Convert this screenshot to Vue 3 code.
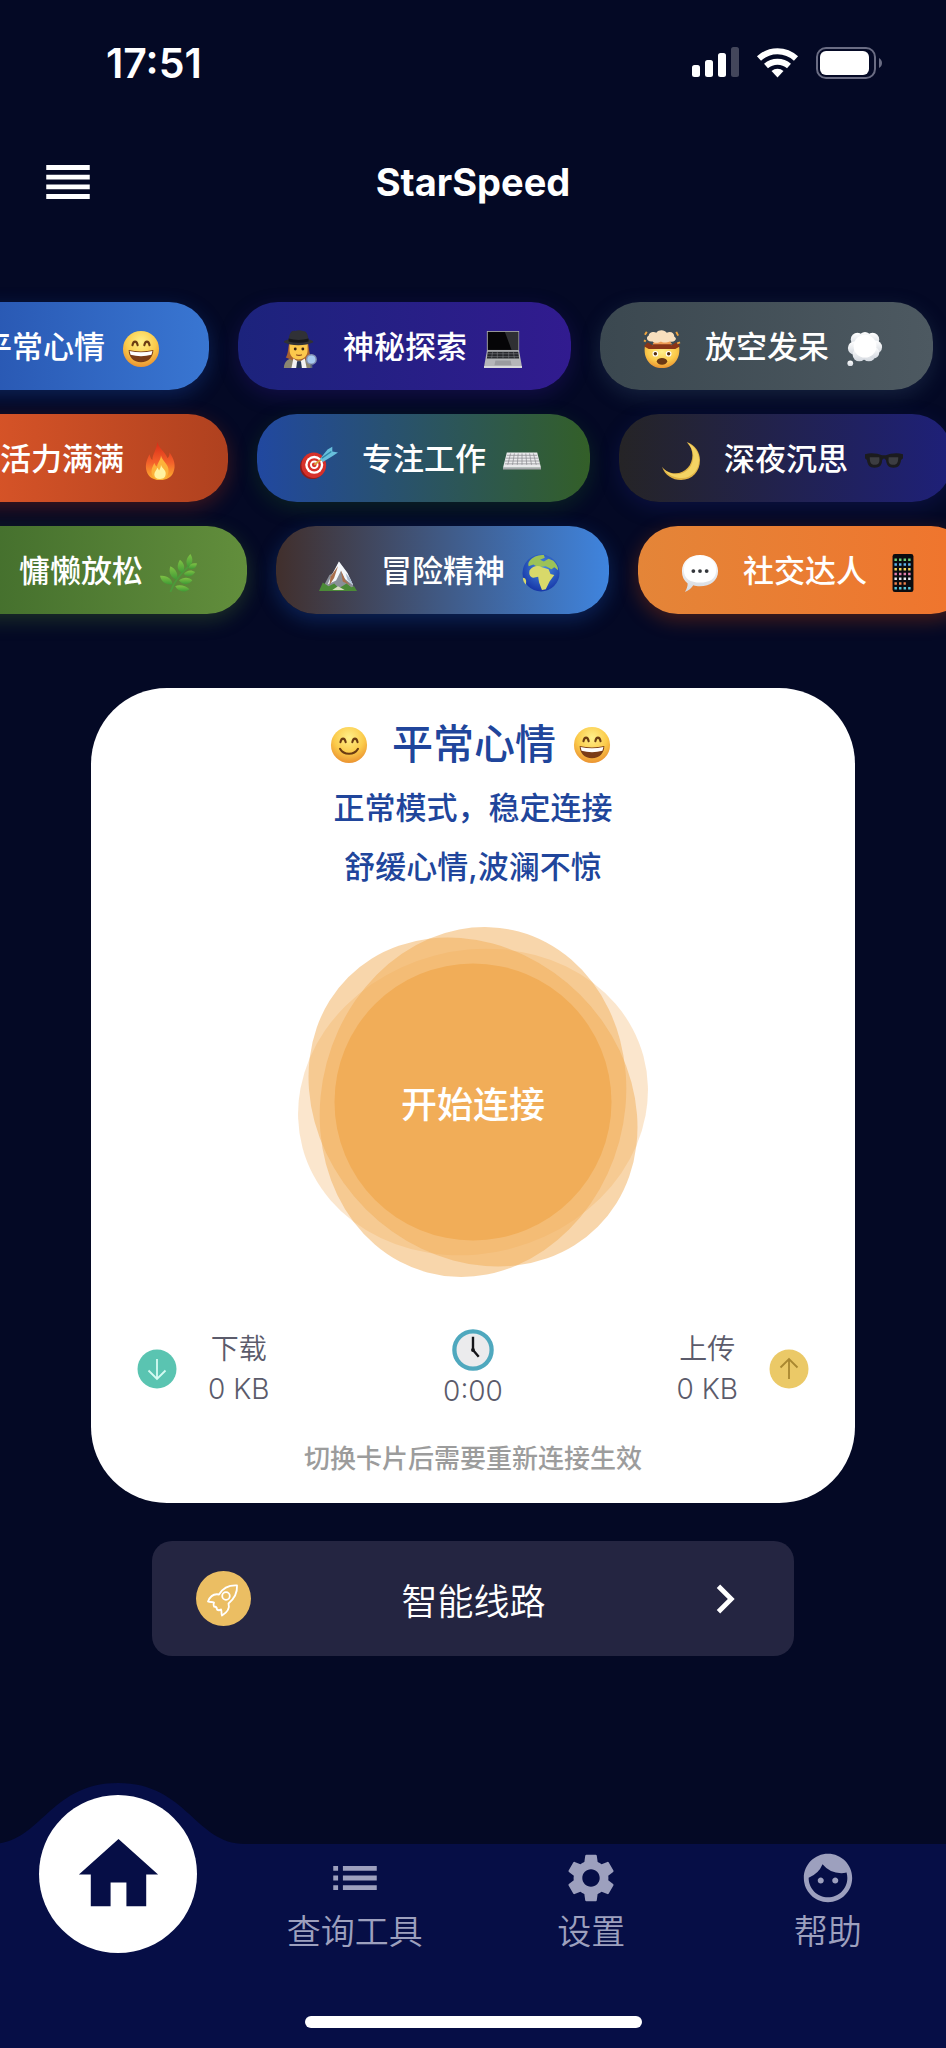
<script setup>
import { ref } from 'vue'

const lanes = [
  {
    offset: -124,
    chips: [
      { text: '平常心情', before: 'smile', after: 'grin', tone: 'calm' },
      { text: '神秘探索', before: 'detective', after: 'laptop', tone: 'mystery' },
      { text: '放空发呆', before: 'mindblown', after: 'thought', tone: 'blank' },
    ],
  },
  {
    offset: -105,
    chips: [
      { text: '活力满满', before: 'fire', after: 'fire', tone: 'energy' },
      { text: '专注工作', before: 'target', after: 'keyboard', tone: 'focus' },
      { text: '深夜沉思', before: 'moon', after: 'shades', tone: 'night' },
    ],
  },
  {
    offset: -86,
    chips: [
      { text: '慵懒放松', before: 'herb', after: 'herb', tone: 'lazy' },
      { text: '冒险精神', before: 'mountain', after: 'globe', tone: 'adventure' },
      { text: '社交达人', before: 'speech', after: 'phone', tone: 'social' },
    ],
  },
]

const tabs = [
  {
    text: '查询工具',
    icon: 'M3 13h2v-2H3v2zm0 4h2v-2H3v2zm0-8h2V7H3v2zm4 4h14v-2H7v2zm0 4h14v-2H7v2zM7 7v2h14V7H7z',
  },
  {
    text: '设置',
    icon: 'M19.14 12.94c.04-.3.06-.61.06-.94 0-.32-.02-.64-.07-.94l2.03-1.58a.49.49 0 0 0 .12-.61l-1.92-3.32a.488.488 0 0 0-.59-.22l-2.39.96c-.5-.38-1.03-.7-1.62-.94l-.36-2.54a.484.484 0 0 0-.48-.41h-3.84c-.24 0-.43.17-.47.41l-.36 2.54c-.59.24-1.13.57-1.62.94l-2.39-.96c-.22-.08-.47 0-.59.22L2.74 8.87c-.12.21-.08.47.12.61l2.03 1.58c-.05.3-.09.63-.09.94s.02.64.07.94l-2.03 1.58a.49.49 0 0 0-.12.61l1.92 3.32c.12.22.37.29.59.22l2.39-.96c.5.38 1.03.7 1.62.94l.36 2.54c.05.24.24.41.48.41h3.84c.24 0 .44-.17.47-.41l.36-2.54c.59-.24 1.13-.56 1.62-.94l2.39.96c.22.08.47 0 .59-.22l1.92-3.32c.12-.22.07-.47-.12-.61l-2.01-1.58zM12 15.6c-1.98 0-3.6-1.62-3.6-3.6s1.62-3.6 3.6-3.6 3.6 1.62 3.6 3.6-1.62 3.6-3.6 3.6z',
  },
  {
    text: '帮助',
    icon: 'M10.25 13c0 .69-.56 1.25-1.25 1.25S7.75 13.69 7.75 13s.56-1.25 1.25-1.25 1.25.56 1.25 1.25zM15 11.75c-.69 0-1.25.56-1.25 1.25s.56 1.25 1.25 1.25 1.25-.56 1.25-1.25-.56-1.25-1.25-1.25zm7 .25c0 5.52-4.48 10-10 10S2 17.52 2 12 6.48 2 12 2s10 4.48 10 10zm-2 0c0-.78-.12-1.53-.33-2.24-.7.15-1.42.24-2.17.24a10 10 0 0 1-7.76-3.69A10.016 10.016 0 0 1 4 11.86c.01.04 0 .09 0 .14 0 4.41 3.59 8 8 8s8-3.59 8-8z',
  },
]

const current = ref(lanes[0].chips[0])
const download = ref('0 KB')
const upload = ref('0 KB')
const duration = ref('0:00')
</script>

<template>
  <!-- shared emoji artwork, 40x40 each -->
  <svg class="sprite" aria-hidden="true">
    <defs>
      <radialGradient id="face" cx="50%" cy="30%" r="75%">
        <stop offset="0" stop-color="#fff08a" />
        <stop offset="0.55" stop-color="#fbcb4b" />
        <stop offset="1" stop-color="#e8892c" />
      </radialGradient>
      <linearGradient id="cloud" x1="0" y1="0" x2="0" y2="1">
        <stop offset="0" stop-color="#fff" />
        <stop offset="1" stop-color="#d3d8df" />
      </linearGradient>
      <linearGradient id="flame" x1="0" y1="0" x2="0" y2="1">
        <stop offset="0" stop-color="#d92a16" />
        <stop offset="0.55" stop-color="#f4622b" />
        <stop offset="1" stop-color="#fdb52e" />
      </linearGradient>
      <linearGradient id="leaf" x1="0" y1="0" x2="0" y2="1">
        <stop offset="0" stop-color="#7fc244" />
        <stop offset="1" stop-color="#3f9a35" />
      </linearGradient>
      <radialGradient id="sea" cx="55%" cy="35%" r="65%">
        <stop offset="0" stop-color="#4a8fe0" />
        <stop offset="1" stop-color="#1636a8" />
      </radialGradient>
    </defs>
    <symbol id="smile" viewBox="0 0 40 40">
      <circle cx="20" cy="20" r="19" fill="url(#face)" />
      <g fill="none" stroke="#6b3b12" stroke-width="2.2" stroke-linecap="round">
        <path d="M11 17c1-5 4.5-5 5.5 0M23.5 17c1-5 4.5-5 5.5 0M10.5 24c4 7 15 7 19 0" />
      </g>
    </symbol>
    <symbol id="grin" viewBox="0 0 40 40">
      <circle cx="20" cy="20" r="19" fill="url(#face)" />
      <path d="M11 16c1-5 4.5-5 5.5 0M23.5 16c1-5 4.5-5 5.5 0" fill="none" stroke="#6b3b12" stroke-width="2.2" stroke-linecap="round" />
      <path d="M7 21c8 2 18 2 26 0 0 7-5 13-13 13S7 28 7 21z" fill="#7a3c17" />
      <path d="M8 22c8 2 16 2 24 0l-1 4c-7 2-15 2-22 0z" fill="#fff" />
    </symbol>
    <symbol id="detective" viewBox="0 0 40 40">
      <path d="M3 40c0-7 5-10 11-11h9c6 1 9 5 9 11z" fill="#8a8671" />
      <path d="M9 12c-2 8-1 12-4 17l8 3h11l8-3c-3-5-2-11-4-17z" fill="#a8622f" />
      <path d="M9 12h19v9c0 6-4 10-9.500 10S9 27 9 21z" fill="#fcc84c" />
      <path d="m13 30 6 4 6-4 2 10H11z" fill="#f3f3f3" />
      <path d="M17 33h4l1 7h-6z" fill="#273657" />
      <circle cx="15" cy="20" r="1.5" fill="#3b2413" /><circle cx="23" cy="20" r="1.5" fill="#3b2413" />
      <path d="M16 26c2 1 4 1 6 0" stroke="#8c461c" stroke-width="1.3" fill="none" />
      <path d="M8 10c1-7 3-10 7-9 3-1 5-1 8 0 4 0 5 3 6 9 3 1 5 1 5 3-8 4-24 4-31 0 0-2 2-2 5-3z" fill="#303136" />
      <path d="M8 9c7 2 14 2 21 0v3c-7 2-14 2-21 0z" fill="#17181b" />
      <circle cx="32" cy="31" r="5" fill="#a6c8ef" stroke="#8390b1" stroke-width="1.5" />
      <path d="M32 36v4" stroke="#5b6480" stroke-width="2" />
    </symbol>
    <symbol id="laptop" viewBox="0 0 40 40">
      <path d="M3 1h34v22H3z" fill="#a5a5a8" />
      <path d="M4 2h32v19H4z" fill="#050507" />
      <path d="M22 2h14v19h-7z" fill="#2f3033" />
      <path d="M3 22h34l3 17H0z" fill="#b5b6b9" />
      <path d="M4 23h32l1 7H3z" fill="#27282c" />
      <path d="M4 25h32M3 28h34M9 23l-1 7M14 23v7M20 23v7M26 23v7M31 23l1 7" stroke="#8b8c90" stroke-width="0.5" />
      <path d="M12 32h16l1 5H11z" fill="#9a9b9f" />
      <path d="M0 38h40v2H0z" fill="#d8d9db" />
    </symbol>
    <symbol id="mindblown" viewBox="0 0 40 40">
      <path d="M2 17c0-2 36-2 36 0 2 13-6 23-18 23S0 30 2 17z" fill="url(#face)" />
      <path d="m1 17 4-4 5 3 5-3 5 2 5-2 5 3 5-3 4 4-5 3H6z" fill="#8a3517" />
      <path d="M10 15c2-3 2-3 1-5h18c-1 2 0 3 2 5z" fill="#ee9b55" />
      <path d="M10 12c-5 1-8-4-4-6 0-4 6-5 8-3 3-4 9-3 11 0 4-2 8 0 8 4 4 2 0 7-5 5-4 2-8 1-9 0-3 2-7 2-9 0z" fill="#f8dfbd" />
      <path d="m2 5 2-3M37 6l-2-4M1 11l2 1M39 13l-3 1" stroke="#f0a43c" stroke-width="2" />
      <circle cx="13" cy="25" r="3" fill="#fff" /><circle cx="27" cy="25" r="3" fill="#fff" />
      <circle cx="13" cy="25" r="1.8" fill="#56300f" /><circle cx="27" cy="25" r="1.8" fill="#56300f" />
      <ellipse cx="20" cy="33" rx="5.500" ry="3.500" fill="#6b3814" />
    </symbol>
    <symbol id="thought" viewBox="0 0 40 40">
      <g fill="url(#cloud)">
        <circle cx="12" cy="10" r="7" /><circle cx="20" cy="8" r="6" /><circle cx="28" cy="10" r="7" />
        <circle cx="9" cy="19" r="7" /><circle cx="31" cy="18" r="7" /><circle cx="14" cy="26" r="7" />
        <circle cx="24" cy="26" r="7" /><circle cx="29" cy="24" r="6" />
        <circle cx="4.5" cy="35" r="3" />
      </g>
      <circle cx="20" cy="17" r="12" fill="#fff" />
    </symbol>
    <symbol id="fire" viewBox="0 0 40 40">
      <path d="M17 0c2 7 8 10 11 17 2-2 2-4 2-6 5 7 7 14 4 21-2 5-7 8-14 8S8 37 6 31C4 24 6 19 9 13c1 3 1 5 3 6 0-7 5-11 5-19z" fill="url(#flame)" />
      <path d="M21 14c1 6 8 9 8 16 0 6-4 10-9 10s-9-4-9-9c0-4 2-6 3-9 1 2 1 3 3 4 0-4 4-7 4-12z" fill="#fcb23a" />
      <path d="M21 24c1 4 5 5 5 9s-2 6-6 6-6-2-6-5 3-5 3-7c1 1 2 2 2 3 1-2 2-3 2-6z" fill="#fff2a0" />
    </symbol>
    <symbol id="target" viewBox="0 0 40 40">
      <ellipse cx="13" cy="26" rx="13" ry="13" fill="#8f1c1c" />
      <ellipse cx="14.5" cy="24.5" rx="13" ry="13.5" fill="#d6302a" />
      <circle cx="15" cy="24" r="9.5" fill="#fff" />
      <circle cx="15" cy="24" r="7" fill="#d6302a" />
      <circle cx="15" cy="24" r="4.5" fill="#fff" />
      <circle cx="15" cy="24" r="2.5" fill="#d6302a" />
      <path d="m15 24 12-9" stroke="#d9a23a" stroke-width="2" />
      <path d="m21 18 8-10 5-3v5l6 1-6 4-10 6z" fill="#67bfdc" />
      <path d="m23 17 10-7" stroke="#2e86a8" stroke-width="1.5" />
    </symbol>
    <symbol id="keyboard" viewBox="0 0 40 40">
      <path d="M4 11h32l4 16H0z" fill="#eaeaec" />
      <path d="M0 27h40v2H0z" fill="#a5a6aa" />
      <path d="M4 14h32M3 17h34M2 20h36M2 23h37M8 12l-3 12M12 12l-2 12M16 12l-1 12M20 12v12M24 12l1 12M28 12l2 12M32 12l3 12" stroke="#8d8e93" stroke-width="0.8" />
    </symbol>
    <symbol id="moon" viewBox="0 0 40 40">
      <path d="M26 0c9 3 14 11 14 19 0 12-8 21-20 21C11 40 3 35 0 26c4 5 9 7 14 7 11 0 18-9 18-19 0-5-2-10-6-14z" fill="#e0b345" />
      <path d="M27 1c8 4 12 11 12 18 0 11-8 19-18 19-8 0-14-3-19-9 4 3 8 5 13 5 11 0 18-9 18-19 0-5-2-10-6-14z" fill="#f4d464" />
    </symbol>
    <symbol id="shades" viewBox="0 0 40 40">
      <path d="M0 13c6-2 13-1 18 1h4c5-2 12-3 18-1v4l-2 2c-1 6-3 8-8 8s-7-2-8-8l-2-2-2 2c0 6-3 8-8 8s-7-2-8-8l-2-2z" fill="#1b1b1e" />
      <path d="M5 16h10c1 6-1 8-5 8s-5-3-5-8zM25 16h10c0 5-1 8-5 8s-6-2-5-8z" fill="#3c3d41" />
    </symbol>
    <symbol id="herb" viewBox="0 0 40 40">
      <path d="M11 40c4-12 11-19 19-27" stroke="#4c9a3a" stroke-width="2" fill="none" />
      <g fill="url(#leaf)">
        <path d="M30 14c-4-5-2-10 2-14 3 5 3 10-2 14z" />
        <path d="M30 15c1-4 4-6 9-5-1 5-4 7-9 5z" />
        <path d="M23 20c-6-4-5-9-2-14 5 4 6 9 2 14z" />
        <path d="M25 21c3-4 8-5 12-2-3 5-8 6-12 2z" />
        <path d="M17 27C10 24 9 18 11 13c6 3 9 9 6 14z" />
        <path d="M20 28c4-4 11-4 14 0-4 5-10 5-14 0z" />
        <path d="M13 32c-7 1-12-3-13-9 7-1 13 3 13 9z" />
        <path d="M16 34c4-2 11-1 15 3-5 4-12 3-15-3z" />
      </g>
    </symbol>
    <symbol id="mountain" viewBox="0 0 40 40">
      <path d="M3 37 11 22l4-2 6-12 9 12 8 18z" fill="#8a8f98" />
      <path d="m21 8 9 12 6 13-9-7-4-8-5 10-9 4 4-9z" fill="#f4f7fb" />
      <path d="m20 13-4 12-5 8 1-9zM23 17l5 11 5 5-8-4z" fill="#a86e4c" />
      <path d="M28 20l5 6 3 7-6-6z" fill="#a9bcd4" />
      <path d="m0 39 4-9 6 4 6-3 5 5 8-5 5 4 3-1 3 5z" fill="#4b8a37" />
      <path d="m14 38 6-4 7 4z" fill="#d7ddbe" />
    </symbol>
    <symbol id="globe" viewBox="0 0 40 40">
      <circle cx="20" cy="20" r="19.5" fill="url(#sea)" />
      <path d="M9 6c4-4 9-5 14-5l1 3-5 2 4 2 5-3 5 2c3 3 5 6 5 10l-4-3-3 2-6-3-8 1-5-3-5 2c-1-3 0-5 2-7z" fill="#9cc257" />
      <path d="M8 17c4-5 9-5 13-3l7 2 2 5 4 1-5 7-4 8-4 1-3-8-1-6-5 1c-4-1-5-4-4-8z" fill="#d8d96a" />
      <path d="M1 25c3 0 4 3 3 7-2-2-3-4-3-7z" fill="#d8d96a" />
    </symbol>
    <symbol id="speech" viewBox="0 0 40 40">
      <path d="M20 1c11 0 19 7 19 17s-8 16-19 16c-3 0-5 0-7-1-2 3-5 6-9 7 2-3 3-6 3-9-4-3-6-7-6-13C1 8 9 1 20 1z" fill="url(#cloud)" />
      <path d="M20 2c10 0 17 6 17 15s-7 13-17 13S3 26 3 17 10 2 20 2z" fill="#fff" />
      <g fill="#33363b"><circle cx="13" cy="18" r="2" /><circle cx="20" cy="18" r="2" /><circle cx="27" cy="18" r="2" /></g>
    </symbol>
    <symbol id="phone" viewBox="0 0 40 40">
      <rect x="9" y="0" width="22" height="40" rx="2.5" fill="#0b0c10" />
      <g stroke-width="2.6" stroke-dasharray="2.6 2.2" fill="none">
        <path d="M11 6h18" stroke="#6fd07b" />
        <path d="M11 11h18" stroke="#5fb4ee" />
        <path d="M11 16h18" stroke="#f3d35b" />
        <path d="M11 21h18" stroke="#e37fae" />
        <path d="M11 26h18" stroke="#e9e9ee" />
        <path d="M11 31h12" stroke="#f0844b" />
        <path d="M11 36h18" stroke="#59c6d9" />
      </g>
    </symbol>
  </svg>

  <div class="app">
    <header>
      <div class="status">
        <time>17:51</time>
        <svg width="190" height="32" viewBox="0 0 190 32" aria-hidden="true">
          <g fill="#fff">
            <rect x="0" y="18" width="8" height="12" rx="2.5" />
            <rect x="13" y="13" width="8" height="17" rx="2.5" />
            <rect x="26" y="6" width="8" height="24" rx="2.5" />
            <rect x="39" y="0" width="8" height="30" rx="2.5" opacity="0.25" />
          </g>
          <path d="M67 11.5a27 27 0 0 1 37 0M74 19a17.500 17.500 0 0 1 23 0" fill="none" stroke="#fff" stroke-width="6" />
          <path d="M79.5 24a9.500 9.500 0 0 1 12 0l-6 6.500z" fill="#fff" />
          <rect x="125" y="1" width="58" height="30" rx="9" fill="none" stroke="#6a6c83" stroke-width="2" />
          <rect x="128" y="4" width="49" height="24" rx="6" fill="#fff" />
          <path d="M187 11c4 2 4 8 0 10z" fill="#6a6c83" />
        </svg>
      </div>
      <div class="topbar">
        <button class="menu" aria-label="menu">
          <svg width="58" height="58" viewBox="0 0 24 24" fill="currentColor">
            <path d="M3 15h18v-2H3v2zm0 4h18v-2H3v2zm0-8h18V9H3v2zm0-6v2h18V5H3z" />
          </svg>
        </button>
        <h1>StarSpeed</h1>
      </div>
    </header>

    <main>
      <section class="moods">
        <div v-for="(lane, i) in lanes" :key="i" class="lane" :style="{ marginLeft: lane.offset + 'px' }">
          <button
            v-for="chip in lane.chips"
            :key="chip.text"
            :class="['chip', chip.tone]"
            @click="current = chip"
          >
            <svg class="emoji before"><use :href="'#' + chip.before" /></svg>
            <span>{{ chip.text }}</span>
            <svg class="emoji"><use :href="'#' + chip.after" /></svg>
          </button>
        </div>
      </section>

      <section class="card">
        <h2>
          <svg class="emoji before"><use :href="'#' + current.before" /></svg>
          <span>{{ current.text }}</span>
          <svg class="emoji"><use :href="'#' + current.after" /></svg>
        </h2>
        <p class="desc">正常模式，稳定连接</p>
        <p class="desc">舒缓心情,波澜不惊</p>

        <button class="connect">
          <svg width="360" height="360" viewBox="-180 -180 360 360" fill="#f1ad58" aria-hidden="true">
            <ellipse rx="151.5" ry="176.5" transform="rotate(75)" opacity="0.3" />
            <ellipse rx="151.5" ry="176.5" transform="rotate(15)" opacity="0.5" />
            <ellipse rx="151.5" ry="176.5" transform="rotate(-45)" opacity="0.5" />
            <circle r="138.5" />
          </svg>
          <span>开始连接</span>
        </button>

        <div class="stats">
          <div class="stat">
            <svg width="40" height="40" viewBox="0 0 40 40" aria-hidden="true">
              <circle cx="20" cy="20" r="19.5" fill="#5ac4b1" />
              <path d="M20 10v20M11.5 21.5 20 30l8.5-8.5" fill="none" stroke="#d5fbf2" stroke-width="1.8" />
            </svg>
            <div class="value"><span>下载</span><span>{{ download }}</span></div>
          </div>
          <div class="value">
            <svg width="42" height="42" viewBox="0 0 44 44" aria-hidden="true">
              <circle cx="22" cy="22" r="19.5" fill="#ebebed" stroke="#4fa8be" stroke-width="4.5" />
              <path d="M22 22V8M22 22l6 7" fill="none" stroke="#15151a" stroke-width="2.5" />
              <circle cx="22" cy="22" r="2" fill="#15151a" />
            </svg>
            <span>{{ duration }}</span>
          </div>
          <div class="stat">
            <div class="value"><span>上传</span><span>{{ upload }}</span></div>
            <svg width="40" height="40" viewBox="0 0 40 40" aria-hidden="true">
              <circle cx="20" cy="20" r="19.5" fill="#ebc967" />
              <path d="M20 30V10M11.5 18.5 20 10l8.5 8.5" fill="none" stroke="#a98730" stroke-width="1.8" />
            </svg>
          </div>
        </div>
        <p class="hint">切换卡片后需要重新连接生效</p>
      </section>

      <button class="route">
        <svg width="55" height="55" viewBox="0 0 55 55" aria-hidden="true">
          <circle cx="27.5" cy="27.5" r="27.5" fill="#ebbe63" />
          <g fill="none" stroke="#fff" stroke-width="1.8" stroke-linejoin="round">
            <path d="M41 14.500c-9-.5-15 4-18 9-5-1-9 2-11 7 2 1 4 0 6 1-.5 2-1 3 0 4 2 0 3 1 3 3 1 1 3 1 4 0 1 2 0 4 1 6 5-3 8-7 6.500-12 6-5 9-10 8.500-18z" />
            <circle cx="30" cy="25" r="3.800" />
          </g>
        </svg>
        <span>智能线路</span>
        <svg width="58" height="58" viewBox="0 0 24 24" fill="#fff" aria-hidden="true">
          <path d="M10 6 8.590 7.410 13.170 12l-4.580 4.590L10 18l6-6z" />
        </svg>
      </button>
    </main>

    <nav>
      <div class="tabs">
        <a href="#home" class="home" aria-label="home">
          <svg class="bump" width="254" height="63" viewBox="0 0 254 63">
            <path d="M0 61C50 61 58 0 127 0s77 61 127 61v2H0z" fill="#060e46" />
          </svg>
          <span class="disc">
            <svg width="95" height="95" viewBox="0 0 24 24" fill="#060e46">
              <path d="M10 20v-6h4v6h5v-8h3L12 3 2 12h3v8z" />
            </svg>
          </span>
        </a>
        <a v-for="tab in tabs" :key="tab.text" :href="'#' + tab.text" class="tab">
          <svg width="58" height="58" viewBox="0 0 24 24" fill="currentColor"><path :d="tab.icon" /></svg>
          <span>{{ tab.text }}</span>
        </a>
      </div>
      <div class="indicator"></div>
    </nav>
  </div>
</template>

<style>
body {
  background: #040925;
}
</style>

<style scoped>
.sprite {
  position: absolute;
  width: 0;
  height: 0;
}

.app {
  min-height: 100vh;
  display: flex;
  flex-direction: column;
  overflow: hidden;
  color: #fff;
  background: #040925;
  font-family: Inter, "Noto Sans CJK SC", sans-serif;
}

button {
  padding: 0;
  border: 0;
  background: none;
  color: inherit;
  font: inherit;
  cursor: pointer;
}

h1, h2, p {
  margin: 0;
}

svg {
  display: block;
  flex-shrink: 0;
}

.status {
  display: flex;
  align-items: center;
  justify-content: space-between;
  height: 126px;
  padding: 0 64px 0 106px;
}

.status time {
  font-size: 41px;
  font-weight: 600;
}

.topbar {
  display: grid;
  grid-template-columns: 58px 1fr 58px;
  align-items: center;
  height: 112px;
  padding: 0 39px;
}

h1 {
  font-size: 38px;
  font-weight: 700;
  text-align: center;
}

.moods {
  display: flex;
  flex-direction: column;
  gap: 24px;
  padding: 64px 0 74px;
}

.lane {
  display: flex;
  gap: 29px;
}

.chip {
  display: flex;
  flex: 0 0 333px;
  align-items: center;
  gap: 17px;
  height: 88px;
  box-sizing: border-box;
  padding: 0 0 3px 43px;
  border-radius: 40px;
  font-size: 31px;
  font-weight: 500;
  white-space: nowrap;
}

.emoji {
  width: 38px;
  height: 38px;
  margin-top: 8px;
}

.before {
  margin-right: 7px;
}

.calm {
  background: linear-gradient(90deg, #2149a3, #3976d2);
  box-shadow: 0 6px 20px rgba(30, 90, 200, 0.3);
}

.mystery {
  background: linear-gradient(90deg, #1c237c, #311b8f);
  box-shadow: 0 6px 20px rgba(49, 27, 146, 0.3);
}

.blank {
  background: linear-gradient(90deg, #3b4850, #4d5961);
  box-shadow: 0 6px 20px rgba(60, 90, 120, 0.3);
}

.energy {
  background: linear-gradient(90deg, #e65b2b, #af411f);
  box-shadow: 0 6px 20px rgba(191, 54, 12, 0.3);
}

.focus {
  background: linear-gradient(90deg, #2148a0, #335f28);
  box-shadow: 0 6px 20px rgba(27, 94, 32, 0.3);
}

.night {
  background: linear-gradient(90deg, #252426, #1e2079);
  box-shadow: 0 6px 20px rgba(26, 35, 126, 0.3);
}

.lazy {
  background: linear-gradient(90deg, #3c6729, #628e3c);
  box-shadow: 0 6px 20px rgba(85, 139, 47, 0.3);
}

.adventure {
  background: linear-gradient(90deg, #412f2c, #3f84de);
  box-shadow: 0 6px 20px rgba(30, 100, 210, 0.3);
}

.social {
  background: linear-gradient(90deg, #e48538, #f0742d);
  box-shadow: 0 6px 20px rgba(230, 81, 0, 0.3);
}

.card {
  display: flex;
  flex-direction: column;
  align-items: center;
  margin: 0 91px;
  padding: 25px 46px 26px;
  border-radius: 76px;
  color: #20459b;
  background: #fff;
}

h2 {
  display: flex;
  align-items: center;
  gap: 17px;
  height: 56px;
  margin-bottom: 9px;
  padding-right: 5px;
  font-size: 41px;
  font-weight: 500;
}

.desc {
  font-size: 31px;
  font-weight: 500;
  line-height: 59px;
}

.connect {
  display: grid;
  place-items: center;
  margin: 26px 0 47px;
  color: #fff;
  font-size: 36px;
  font-weight: 500;
}

.connect > * {
  grid-area: 1 / 1;
}

.stats {
  display: flex;
  align-items: flex-start;
  justify-content: space-between;
  align-self: stretch;
  height: 84px;
  color: #5b5b6b;
}

.stat {
  display: flex;
  align-items: center;
  gap: 31px;
}

.value {
  display: flex;
  flex-direction: column;
  align-items: center;
  font-size: 28px;
  font-weight: 350;
  line-height: 40px;
}

.hint {
  margin-top: 28px;
  color: #9c9c9c;
  font-size: 26px;
  font-weight: 500;
  line-height: 36px;
}

.route {
  display: flex;
  align-items: center;
  width: calc(100% - 304px);
  height: 115px;
  margin: 38px 152px;
  padding: 0 40px 0 44px;
  border-radius: 20px;
  background: #242541;
  font-size: 36px;
  font-weight: 350;
}

.route span {
  flex: 1;
}

nav {
  margin-top: auto;
  padding-bottom: 20px;
  background: #060e46;
}

.tabs {
  display: grid;
  grid-template-columns: repeat(4, 1fr);
  height: 172px;
}

.tab {
  display: flex;
  flex-direction: column;
  align-items: center;
  padding-top: 5px;
  color: #9da0be;
  font-size: 34px;
  font-weight: 350;
  line-height: 50px;
  text-decoration: none;
}

.home {
  position: relative;
  display: flex;
  justify-content: center;
}

/* the bar swells up around the active tab */
.bump {
  position: absolute;
  top: -61px;
  left: 50%;
  transform: translateX(-50%);
}

.disc {
  position: relative;
  display: grid;
  place-items: center;
  width: 158px;
  height: 158px;
  margin-top: -49px;
  border-radius: 50%;
  background: #fff;
}

.indicator {
  width: 337px;
  height: 12px;
  margin: 0 auto;
  border-radius: 6px;
  background: #fff;
}
</style>
